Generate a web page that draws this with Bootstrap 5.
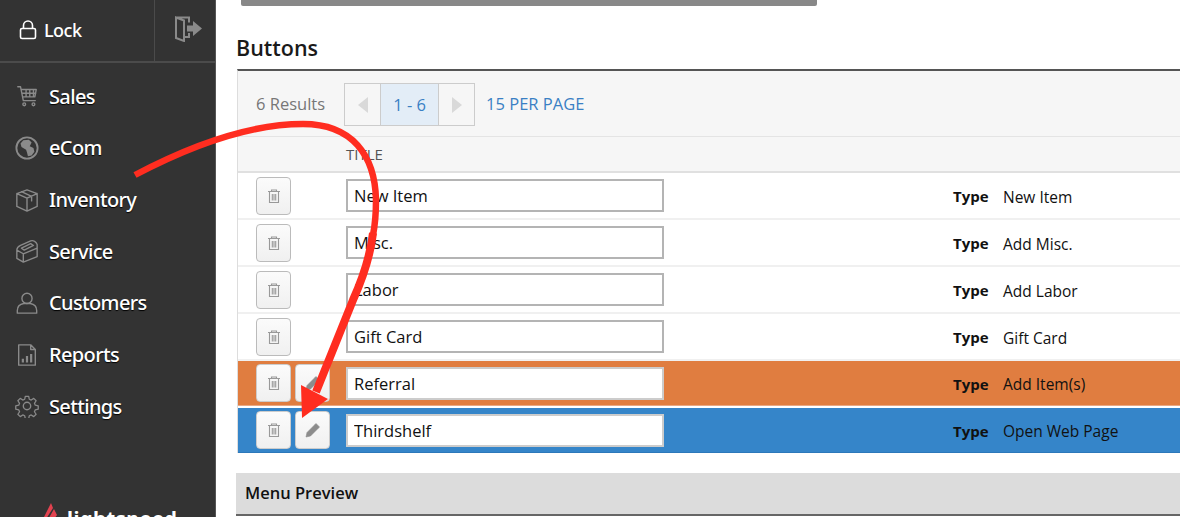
<!DOCTYPE html>
<html lang="en">
<head>
<meta charset="utf-8">
<title>Buttons</title>
<link rel="stylesheet" href="https://cdn.jsdelivr.net/npm/bootstrap@5.3.0/dist/css/bootstrap.min.css">
<style>
html,body{height:517px;overflow:hidden;background:#fff;font-family:"Open Sans",sans-serif;color:#111}
.shell{height:517px;position:relative}
.side{width:216px;height:517px;background:#333;flex:none;overflow:hidden;border-right:1px solid #555}
.lockbar{height:63px;flex:none;border-bottom:2px solid #4b4b4b}
.lockbtn{width:155px;padding-left:19px;gap:7px;color:#fff;font:500 18px "Noto Sans",sans-serif;border-right:1px solid #4b4b4b;letter-spacing:-.5px;padding-bottom:2px}
.logoutbtn{flex:1;padding-left:20px;padding-bottom:3px}
.navlist{padding-top:7.5px;flex:none}
.navrow{height:51.65px;padding-left:15px;color:#fff;font:500 20px "Noto Sans",sans-serif;letter-spacing:-.65px;text-shadow:0 1px 1px #000}
.navrow svg{width:24px;height:24px;flex:none;margin-right:10px}
.gl{fill:none;stroke:#8a8a8a;stroke-width:1.5;stroke-linejoin:round;stroke-linecap:round}
.brand{padding:71px 0 0 43px;gap:9px;color:#fff;font:700 20px/1 "Noto Sans",sans-serif;letter-spacing:.5px;white-space:nowrap;flex:none}
.brand span{margin-top:6px}
.main{flex:1;min-width:0;padding-left:20px}
.topbar{width:576px;height:6px;background:#888;margin-left:5px;border-radius:0 0 2px 2px}
.headline{font-size:21.5px;font-weight:600;line-height:28px;margin:28px 0 7px 0;color:#1a1a1a}
.panel{margin-left:1px;border-top:2px solid #555;border-left:1px solid #ddd}
.tools{height:66px;background:#f6f6f6;border-bottom:1px solid #e4e4e4;padding:2px 0 0 18px;font-size:16.5px;color:#777}
.pager{height:43px;margin-left:19px;border:1px solid #ccc;background:#f6f6f6}
.pgarrow{width:35px;border:0}
.pgnow{width:59px;background:#e3edf7;border-left:1px solid #ccc;border-right:1px solid #ccc;color:#3a80c4;padding-top:2px}
.perpage{margin-left:11px;color:#3a80c4}
.headrow{height:36px;background:#f6f6f6;border-bottom:2px solid #e0e0e0;padding-left:108px;font-size:15px;color:#555}
.itemrow{height:47px;border-bottom:2px solid #f0f0f0}
.itemrow.r-orange{height:45px;background:#e07d40;border:0;border-bottom:1px solid #e9a883;margin-bottom:2px}
.itemrow.r-blue{height:45px;background:#3585c9;border:0;border-bottom:1px solid #2c78ba}
.tools-cell{width:108px;padding-left:18px;gap:4px}
.iconbtn{width:35px;height:38px;padding:0;border:1px solid #bbb;border-radius:4px;background:linear-gradient(#fbfbfb,#f0f0f0)}
.r-orange .iconbtn,.r-blue .iconbtn{border-color:#ccc}
.iconbtn svg{width:16px;height:16px}
.tfield{width:318px;height:33px;border:2px solid #b4b4b4;background:#fff;padding:0 6px;font:16.5px "Open Sans",sans-serif;color:#111;border-radius:0}
.r-orange .tfield,.r-blue .tfield{border-color:#ccc}
.tlabel{margin-left:289px;margin-top:2px;width:50px;font-size:15px;font-weight:700;color:#111}
.tvalue{margin-top:4px;font-size:15.5px;color:#111}
.preview{margin-top:20px;height:43px;background:#dcdcdc;border-bottom:2px solid #666;padding-left:9px;font-size:16.5px;font-weight:600;color:#111}
.scribble{position:absolute;left:0;top:0;width:1180px;height:517px;pointer-events:none}
</style>
</head>
<body>
<div class="shell d-flex">
  <aside class="side d-flex flex-column">
    <div class="lockbar d-flex">
      <div class="lockbtn d-flex align-items-center">
        <svg width="18" height="20" viewBox="0 0 18 20"><rect x="1.5" y="8.5" width="15" height="10" rx="1.5" fill="none" stroke="#fff" stroke-width="1.6"/><path d="M4.5 8.5V5.5a4.500 4.500 0 0 1 9 0v3" fill="none" stroke="#fff" stroke-width="1.6"/></svg>
        <span>Lock</span>
      </div>
      <div class="logoutbtn d-flex align-items-center">
        <svg width="27" height="26" viewBox="0 0 27 26"><path d="M1 1.500h13v5M14 17v4H9M1 1.500l8 3V25l-8-3z" fill="none" stroke="#8a8a8a" stroke-width="2"/><path d="M12 9.500h6V5l9 7.500-9 7.500v-4.500h-6z" fill="#8a8a8a"/></svg>
      </div>
    </div>
    <nav class="navlist">
      <div class="navrow d-flex align-items-center"><svg viewBox="0 0 26 26" class="gl"><path d="M3 3h3l3 15h13M7 6h16l-1.500 8H8.500M7.500 10h15M12 6v8M16 6v8M20 6v8"/><circle cx="10" cy="22" r="1.500"/><circle cx="20" cy="22" r="1.500"/></svg><span>Sales</span></div>
      <div class="navrow d-flex align-items-center"><svg viewBox="0 0 26 26" class="gl"><circle cx="13" cy="13" r="11.500" stroke-width="2"/><path d="M9 4.500l6-.5 3 3-2 4 4 2 1 4-3 4-4 1-1-4-1-3-5-3-1-4z" fill="#8a8a8a" stroke="none"/></svg><span>eCom</span></div>
      <div class="navrow d-flex align-items-center"><svg viewBox="0 0 26 26" class="gl"><path d="M13 2l11 4v14l-11 5-11-5V6zM2 6l11 5 11-5M13 11v14M7 4l11 5v5"/></svg><span>Inventory</span></div>
      <div class="navrow d-flex align-items-center"><svg viewBox="0 0 26 26" class="gl"><path d="M2 12v9l7 4 15-6v-9M2 12l7 4 15-6M2 12c0-3 2-4 4-5l11-5c3-1 6 1 7 4v4M9 16v9M7 10l10-5 3 2-10 5z"/></svg><span>Service</span></div>
      <div class="navrow d-flex align-items-center"><svg viewBox="0 0 26 26" class="gl"><circle cx="13" cy="8" r="5.500"/><path d="M2.500 24v-3c0-5 4-7 7-7.500h7c3 .5 7 2.500 7 7.500v3z"/></svg><span>Customers</span></div>
      <div class="navrow d-flex align-items-center"><svg viewBox="0 0 26 26" class="gl"><path d="M4 2h13l5 5v17H4zM17 2v5h5"/><path d="M8.500 21v-4M13 21v-7M17.500 21v-9" stroke-width="2.400" stroke-linecap="butt"/></svg><span>Reports</span></div>
      <div class="navrow d-flex align-items-center"><svg viewBox="0 0 26 26" class="gl"><circle cx="13" cy="13" r="4"/><path d="M11 1.500h4l.7 3.500 2.300 1 3-2 2.800 2.800-2 3 1 2.300 3.500.7v4l-3.500.7-1 2.300 2 3-2.800 2.800-3-2-2.300 1-.7 3.500h-4l-.7-3.500-2.300-1-3 2-2.800-2.800 2-3-1-2.300-3.500-.7v-4l3.500-.7 1-2.300-2-3 2.800-2.800 3 2 2.300-1z" transform="translate(1.100 1.100) scale(.915)"/></svg><span>Settings</span></div>
    </nav>
    <div class="brand d-flex align-items-start">
      <svg width="15" height="24" viewBox="0 0 15 24"><path d="M8 0l2 5-7 11H0zM11 6l3 6-6 8H3z" fill="#e2424f"/></svg>
      <span>lightspeed</span>
    </div>
  </aside>
  <main class="main">
    <div class="topbar"></div>
    <h2 class="headline">Buttons</h2>
    <section class="panel">
      <div class="tools d-flex align-items-center">
        <span>6 Results</span>
        <div class="pager d-flex">
          <div class="pgarrow d-flex align-items-center justify-content-center"><svg width="10" height="16" viewBox="0 0 10 16"><path d="M10 0v16L0 8z" fill="#d9d9d9"/></svg></div>
          <div class="pgnow d-flex align-items-center justify-content-center">1 - 6</div>
          <div class="pgarrow d-flex align-items-center justify-content-center"><svg width="10" height="16" viewBox="0 0 10 16"><path d="M0 0v16l10-8z" fill="#d9d9d9"/></svg></div>
        </div>
        <span class="perpage">15 PER PAGE</span>
      </div>
      <div class="headrow d-flex align-items-center">TITLE</div>

      <div class="itemrow d-flex align-items-center">
        <div class="tools-cell d-flex"><button class="iconbtn d-flex align-items-center justify-content-center"><svg viewBox="0 0 16 16"><path d="M2 3.500h12M5.500 3.500V2h5v1.500M3.500 3.500v11h9v-11M6.300 6v6.500M8 6v6.500M9.700 6v6.500" fill="none" stroke="#999" stroke-width="1.100"/></svg></button></div>
        <input class="tfield" value="New Item"><span class="tlabel">Type</span><span class="tvalue">New Item</span>
      </div>
      <div class="itemrow d-flex align-items-center">
        <div class="tools-cell d-flex"><button class="iconbtn d-flex align-items-center justify-content-center"><svg viewBox="0 0 16 16"><path d="M2 3.500h12M5.500 3.500V2h5v1.500M3.500 3.500v11h9v-11M6.300 6v6.500M8 6v6.500M9.700 6v6.500" fill="none" stroke="#999" stroke-width="1.100"/></svg></button></div>
        <input class="tfield" value="Misc."><span class="tlabel">Type</span><span class="tvalue">Add Misc.</span>
      </div>
      <div class="itemrow d-flex align-items-center">
        <div class="tools-cell d-flex"><button class="iconbtn d-flex align-items-center justify-content-center"><svg viewBox="0 0 16 16"><path d="M2 3.500h12M5.500 3.500V2h5v1.500M3.500 3.500v11h9v-11M6.300 6v6.500M8 6v6.500M9.700 6v6.500" fill="none" stroke="#999" stroke-width="1.100"/></svg></button></div>
        <input class="tfield" value="Labor"><span class="tlabel">Type</span><span class="tvalue">Add Labor</span>
      </div>
      <div class="itemrow d-flex align-items-center">
        <div class="tools-cell d-flex"><button class="iconbtn d-flex align-items-center justify-content-center"><svg viewBox="0 0 16 16"><path d="M2 3.500h12M5.500 3.500V2h5v1.500M3.500 3.500v11h9v-11M6.300 6v6.500M8 6v6.500M9.700 6v6.500" fill="none" stroke="#999" stroke-width="1.100"/></svg></button></div>
        <input class="tfield" value="Gift Card"><span class="tlabel">Type</span><span class="tvalue">Gift Card</span>
      </div>
      <div class="itemrow r-orange d-flex align-items-center">
        <div class="tools-cell d-flex"><button class="iconbtn d-flex align-items-center justify-content-center"><svg viewBox="0 0 16 16"><path d="M2 3.500h12M5.500 3.500V2h5v1.500M3.500 3.500v11h9v-11M6.300 6v6.500M8 6v6.500M9.700 6v6.500" fill="none" stroke="#999" stroke-width="1.100"/></svg></button><button class="iconbtn d-flex align-items-center justify-content-center"><svg viewBox="0 0 16 16"><path d="M1 15l1-4.500L11 1.500 14.500 5l-9 9zM9.800 2.800l3.400 3.400" fill="#8c8c8c" stroke="#8c8c8c" stroke-width=".6"/></svg></button></div>
        <input class="tfield" value="Referral"><span class="tlabel">Type</span><span class="tvalue">Add Item(s)</span>
      </div>
      <div class="itemrow r-blue d-flex align-items-center">
        <div class="tools-cell d-flex"><button class="iconbtn d-flex align-items-center justify-content-center"><svg viewBox="0 0 16 16"><path d="M2 3.500h12M5.500 3.500V2h5v1.500M3.500 3.500v11h9v-11M6.300 6v6.500M8 6v6.500M9.700 6v6.500" fill="none" stroke="#999" stroke-width="1.100"/></svg></button><button class="iconbtn d-flex align-items-center justify-content-center"><svg viewBox="0 0 16 16"><path d="M1 15l1-4.500L11 1.500 14.500 5l-9 9zM9.800 2.800l3.400 3.400" fill="#8c8c8c" stroke="#8c8c8c" stroke-width=".6"/></svg></button></div>
        <input class="tfield" value="Thirdshelf"><span class="tlabel">Type</span><span class="tvalue">Open Web Page</span>
      </div>
    </section>
    <div class="preview d-flex align-items-center">Menu Preview</div>
  </main>
  <svg class="scribble" viewBox="0 0 1180 517">
    <path d="M135 175C190 146 250 124 303 124C352 124 375 155 376 200C376 215 375 225 373 235" fill="none" stroke="#ff2d20" stroke-width="6.500"/>
    <path d="M373 233C370 258 362 280 353 300L316 392" fill="none" stroke="#ff2d20" stroke-width="8"/>
    <polygon points="302,418 328,399 301,385" fill="#ff2d20"/>
  </svg>
</div>
<script src="https://cdn.jsdelivr.net/npm/bootstrap@5.3.0/dist/js/bootstrap.bundle.min.js"></script>
</body>
</html>
